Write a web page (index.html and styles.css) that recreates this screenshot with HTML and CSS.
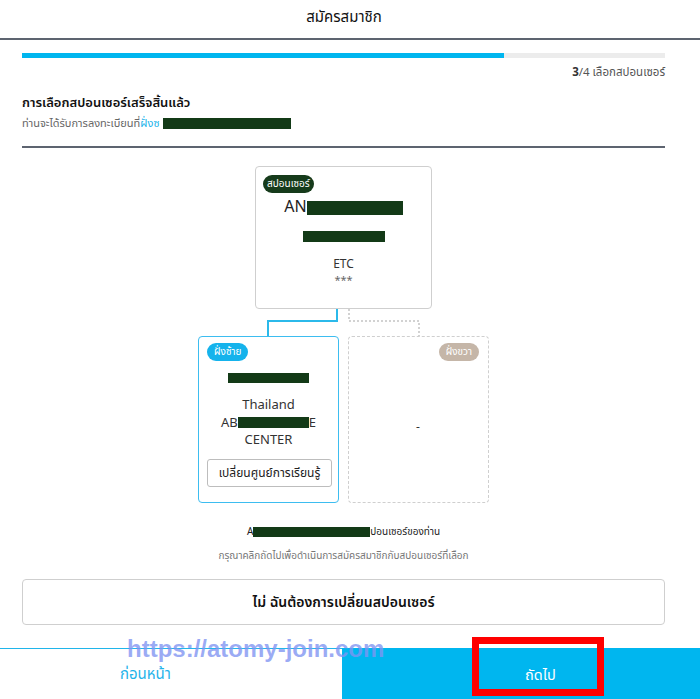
FILE: index.html
```html
<!DOCTYPE html>
<html lang="th">
<head>
<meta charset="utf-8">
<title>สมัครสมาชิก</title>
<link rel="stylesheet" href="styles.css">
</head>
<body>
<div class="page">
  <header class="top">สมัครสมาชิก</header>
  <main class="main">
    <div class="progress"><div class="progress-fill"></div></div>
    <div class="step"><b>3</b>/4 เลือกสปอนเซอร์</div>
    <h1 class="title">การเลือกสปอนเซอร์เสร็จสิ้นแล้ว</h1>
    <p class="sub">ท่านจะได้รับการลงทะเบียนที่<span class="blue">ฝั่งซ</span><span class="redact r-sub"></span></p>
    <div class="rule"></div>

    <div class="tree">
      <div class="card sponsor">
        <span class="badge badge-green">สปอนเซอร์</span>
        <div class="s-name">AN<span class="redact r-name"></span></div>
        <span class="redact r-id"></span>
        <div class="s-etc">ETC</div>
        <div class="s-star">***</div>
      </div>
      <svg class="links" width="291" height="27" viewBox="0 0 291 27">
        <path d="M139 0 V12 H70 V27" fill="none" stroke="#2bb9ea" stroke-width="2"/>
        <path d="M151 0 V12 H221 V27" fill="none" stroke="#d2d2d2" stroke-width="2" stroke-dasharray="2 2"/>
      </svg>
      <div class="kids">
        <div class="card kid kid-left">
          <div class="kid-head"><span class="badge badge-blue">ฝั่งซ้าย</span></div>
          <span class="redact r-kname"></span>
          <div class="k-info">Thailand<br>AB<span class="redact r-center"></span>E<br>CENTER</div>
          <button class="change">เปลี่ยนศูนย์การเรียนรู้</button>
        </div>
        <div class="card kid kid-right">
          <div class="kid-head right"><span class="badge badge-tan">ฝั่งขวา</span></div>
          <div class="dash">-</div>
        </div>
      </div>
    </div>

    <p class="confirm">A<span class="redact r-conf"></span>ปอนเซอร์ของท่าน</p>
    <p class="note">กรุณาคลิกถัดไปเพื่อดำเนินการสมัครสมาชิกกับสปอนเซอร์ที่เลือก</p>
    <div class="no-btn">ไม่ ฉันต้องการเปลี่ยนสปอนเซอร์</div>
  </main>
  <footer class="bottom">
    <div class="prev">ก่อนหน้า</div>
    <div class="next">ถัดไป</div>
  </footer>
  <div class="mark">https://atomy-join.com</div>
  <div class="redbox"></div>
</div>
</body>
</html>
```

FILE: styles.css
```css
* { box-sizing: border-box; }
html, body { margin: 0; padding: 0; background: #fff; }
body {
  font-family: "Noto Sans Thai", "Noto Sans", "Open Sans", sans-serif;
  color: #222;
}
.page { position: relative; width: 700px; height: 699px; overflow: hidden; }

.top {
  height: 40px;
  line-height: 36px;
  text-align: center;
  font-size: 15px;
  padding-right: 12px;
  border-bottom: 2px solid #5d6470;
  color: #111;
}

.main { padding: 13px 35px 0 22px; }

.progress { height: 5px; background: #ececec; }
.progress-fill { width: 75%; height: 100%; background: #00b6ef; }

.step {
  text-align: right;
  font-size: 11.5px;
  color: #555;
  margin-top: 7px;
  line-height: 16px;
}
.step b { font-weight: 700; color: #333; }

.title {
  margin: 12px 0 0;
  font-size: 13px;
  font-weight: 600;
  line-height: 20px;
  color: #111;
}
.sub {
  margin: 3px 0 0;
  font-size: 11px;
  line-height: 16px;
  color: #666;
}
.blue { color: #1cb3ea; }

.redact {
  display: inline-block;
  background: #133a17;
  vertical-align: middle;
}
.r-sub { width: 128px; height: 11px; margin-left: 3px; }
.r-name { width: 96px; height: 14px; }
.r-id { display: block; width: 82px; height: 11px; margin: 13px auto 0; }
.r-kname { display: block; width: 81px; height: 10px; margin: 12px auto 0; }
.r-center { width: 71px; height: 11px; }
.r-conf { width: 117px; height: 10px; }

.rule { height: 2px; background: #5d6470; margin-top: 14px; }

.tree {
  display: flex;
  flex-direction: column;
  align-items: center;
  margin-top: 18px;
}
.card { background: #fff; border-radius: 4px; }
.sponsor {
  width: 177px;
  height: 143px;
  border: 1px solid #cfcfcf;
  padding: 8px 7px 0;
  text-align: center;
}
.badge {
  display: inline-block;
  height: 18px;
  line-height: 18px;
  padding: 0 7px;
  border-radius: 9px;
  font-size: 10px;
  color: #fff;
  white-space: nowrap;
}
.sponsor .badge { display: table; padding: 0 4px; }
.badge-green { background: #163b1b; }
.badge-blue { background: #15b3ec; }
.badge-tan { background: #c5b6a8; }

.s-name { font-size: 16px; line-height: 22px; margin-top: 3px; color: #222; }
.s-etc { font-size: 12px; line-height: 14px; margin-top: 15px; color: #333; }
.s-star { font-size: 11px; line-height: 12px; margin-top: 4px; color: #666; }

.links { display: block; }

.kids { display: flex; gap: 9px; }
.kid { width: 141px; height: 167px; padding: 6px 8px; text-align: center; }
.kid-left { border: 1px solid #3dbdf0; }
.kid-right { border: 1.5px dashed #cfcfcf; display: flex; flex-direction: column; padding-right: 9px; }
.kid-head { display: flex; height: 18px; }
.kid-head.right { justify-content: flex-end; }
.k-info { font-size: 13px; line-height: 17.5px; color: #333; margin-top: 14px; }
.change {
  display: block;
  width: 125px;
  height: 28px;
  margin: 9px 0 0 0;
  padding: 0;
  background: #fff;
  border: 1px solid #bdbdbd;
  border-radius: 3px;
  font-family: inherit;
  font-size: 12px;
  color: #222;
}
.dash { flex: 1; display: flex; align-items: center; justify-content: center; font-size: 12px; color: #333; padding-bottom: 4px; }

.confirm {
  margin: 20px 0 0;
  text-align: center;
  font-size: 10px;
  line-height: 18px;
  color: #222;
}
.note {
  margin: 8px 0 0;
  text-align: center;
  font-size: 10px;
  line-height: 14px;
  color: #777;
}
.no-btn {
  margin-top: 16px;
  height: 46px;
  border: 1px solid #cfcfcf;
  border-radius: 4px;
  display: flex;
  align-items: center;
  justify-content: center;
  font-size: 14px;
  font-weight: 600;
  color: #111;
}

.bottom {
  position: absolute;
  left: 0; right: 0; bottom: 0;
  height: 51px;
  display: flex;
}
.prev {
  width: 342px;
  border-top: 1px solid #20b5ea;
  color: #1fb3ea;
  font-size: 15px;
  line-height: 48px;
  padding: 2px 0 0 120px;
}
.next {
  flex: 1;
  background: #00b6ef;
  color: #fff;
  font-size: 14.5px;
  line-height: 50px;
  padding: 3px 0 0 183px;
}

.mark {
  position: absolute;
  left: 127px;
  top: 635px;
  font-family: "Liberation Sans", Arial, sans-serif;
  font-weight: 700;
  font-size: 24px;
  line-height: 28px;
  color: rgba(128, 148, 242, 0.78);
  white-space: nowrap;
}
.redbox {
  position: absolute;
  left: 472px;
  top: 637px;
  width: 132px;
  height: 59px;
  border: 7px solid #ff0000;
}
```
